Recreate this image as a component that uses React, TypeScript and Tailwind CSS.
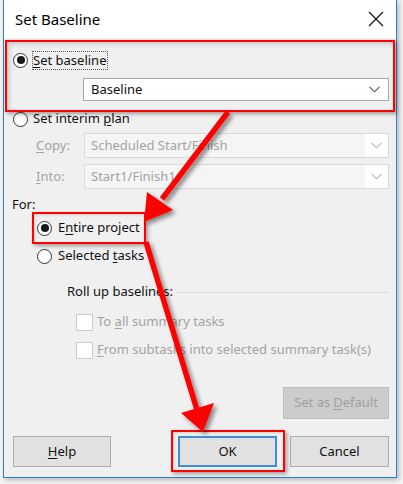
import React from "react";

const font = { fontFamily: '"Noto Sans", "Open Sans", sans-serif' };

function Radio({ checked }: { checked?: boolean }) {
  return (
    <span className="w-[15px] h-[15px] shrink-0 rounded-full border border-[#333333] bg-white flex items-center justify-center">
      {checked && <span className="w-[8px] h-[8px] rounded-full bg-[#1a1a1a]" />}
    </span>
  );
}

function Checkbox() {
  return <span className="w-[17px] h-[17px] shrink-0 border border-[#cccccc] bg-white" />;
}

function Chevron({ color }: { color: string }) {
  return (
    <svg width="11" height="7" viewBox="0 0 11 7" className="shrink-0">
      <path d="M0.5 0.8 L5.5 5.8 L10.5 0.8" fill="none" stroke={color} strokeWidth="1.1" />
    </svg>
  );
}

export default function App() {
  return (
    <div className="relative w-[403px] h-[484px] bg-[#f4f4f4] overflow-hidden text-[13px] text-[#111111]" style={font}>
      {/* dialog */}
      <div className="ml-[3px] w-[394px] h-[478px] border-x border-b border-[#2b7fd6] bg-[#f0f0f0] flex flex-col shadow-[2px_2px_5px_rgba(0,0,0,0.25)]">
        {/* title bar */}
        <div className="h-[38px] shrink-0 bg-white flex items-center pl-[11px] pr-[12px]">
          <span className="text-[15px] text-black leading-none">Set Baseline</span>
          <svg width="16" height="16" viewBox="0 0 16 16" className="ml-auto">
            <path d="M1 1 L15 15 M15 1 L1 15" stroke="#111" strokeWidth="1.2" />
          </svg>
        </div>

        {/* row: set baseline */}
        <div className="mt-[12px] h-[20px] pl-[9px] flex items-center gap-[4px]">
          <Radio checked />
          <span className="border border-dotted border-[#555] leading-[17px] pr-[1px]">
            <u className="underline-offset-2">S</u>et baseline
          </span>
        </div>
        <div className="mt-[8px] ml-[79px] w-[306px] h-[23px] border border-[#a8a8a8] bg-white flex items-center pl-[7px] pr-[8px]">
          <span>Baseline</span>
          <span className="ml-auto"><Chevron color="#555" /></span>
        </div>

        {/* set interim plan */}
        <div className="mt-[8px] h-[20px] pl-[9px] flex items-center gap-[5px]">
          <Radio />
          <span>Set interim <u className="underline-offset-2">p</u>lan</span>
        </div>
        <div className="mt-[4px] h-[25px] flex items-center">
          <span className="w-[80px] pl-[32px] text-[#a3a3a3]"><u className="underline-offset-2">C</u>opy:</span>
          <div className="w-[305px] h-[25px] border border-[#d9d9d9] bg-[#f5f5f5] flex items-center pl-[6px] text-[#a3a3a3]">
            <span>Scheduled Start/Finish</span>
            <span className="ml-auto h-full w-[23px] bg-white flex items-center justify-center"><Chevron color="#b5b5b5" /></span>
          </div>
        </div>
        <div className="mt-[6px] h-[25px] flex items-center">
          <span className="w-[80px] pl-[32px] text-[#a3a3a3]"><u className="underline-offset-2">I</u>nto:</span>
          <div className="w-[305px] h-[25px] border border-[#d9d9d9] bg-[#f5f5f5] flex items-center pl-[6px] text-[#a3a3a3]">
            <span>Start1/Finish1</span>
            <span className="ml-auto h-full w-[23px] bg-white flex items-center justify-center"><Chevron color="#b5b5b5" /></span>
          </div>
        </div>

        {/* For */}
        <div className="mt-[7px] h-[18px] pl-[8px] flex items-center">For:</div>
        <div className="mt-[4px] h-[20px] pl-[33px] flex items-center gap-[6px]">
          <Radio checked />
          <span>E<u className="underline-offset-2">n</u>tire project</span>
        </div>
        <div className="mt-[8px] h-[20px] pl-[33px] flex items-center gap-[6px]">
          <Radio />
          <span>Selected <u className="underline-offset-2">t</u>asks</span>
        </div>

        {/* roll up */}
        <div className="mt-[17px] h-[18px] pl-[63px] pr-[7px] flex items-center gap-[4px]">
          <span>Roll up baselines:</span>
          <span className="flex-1 h-px bg-[#dcdcdc]" />
        </div>
        <div className="mt-[12px] h-[18px] pl-[72px] flex items-center gap-[4px] text-[#a3a3a3]">
          <Checkbox />
          <span>To <u className="underline-offset-2">a</u>ll summary tasks</span>
        </div>
        <div className="mt-[10px] h-[18px] pl-[72px] flex items-center gap-[4px] text-[#a3a3a3]">
          <Checkbox />
          <span><u className="underline-offset-2">F</u>rom subtasks into selected summary task(s)</span>
        </div>

        {/* set as default */}
        <div className="mt-[28px] flex justify-end pr-[7px]">
          <div className="w-[106px] h-[32px] border border-[#bfbfbf] bg-[#cccccc] flex items-center justify-center text-[#a0a0a0]">
            Set as <u className="underline-offset-2 ml-[3px]">D</u>efault
          </div>
        </div>

        {/* buttons */}
        <div className="mt-[17px] flex items-center pl-[9px] pr-[7px]">
          <div className="w-[98px] h-[31px] border border-[#adadad] bg-[#e1e1e1] flex items-center justify-center">
            <u className="underline-offset-2">H</u>elp
          </div>
          <div className="ml-auto w-[99px] h-[31px] border-2 border-[#3d8ddb] bg-[#e1e1e1] flex items-center justify-center">
            OK
          </div>
          <div className="ml-[13px] w-[99px] h-[31px] border border-[#adadad] bg-[#e1e1e1] flex items-center justify-center">
            Cancel
          </div>
        </div>
      </div>

      {/* red annotation boxes */}
      <div className="absolute left-[5px] top-[40px] w-[390px] h-[72px] border-2 border-[#ff0000] shadow-[2px_2px_4px_rgba(0,0,0,0.35),inset_2px_2px_5px_rgba(0,0,0,0.18)]" />
      <div className="absolute left-[32px] top-[212px] w-[114px] h-[32px] border-2 border-[#ff0000] shadow-[2px_2px_4px_rgba(0,0,0,0.35),inset_1px_1px_3px_rgba(0,0,0,0.15)]" />
      <div className="absolute left-[171px] top-[430px] w-[114px] h-[42px] border-2 border-[#ff0000] shadow-[2px_2px_4px_rgba(0,0,0,0.35),inset_1px_1px_3px_rgba(0,0,0,0.15)]" />

      {/* arrows */}
      <svg className="absolute left-0 top-0 pointer-events-none" width="403" height="484" viewBox="0 0 403 484">
        <defs>
          <filter id="sh" x="-20%" y="-20%" width="150%" height="150%">
            <feDropShadow dx="3" dy="3" stdDeviation="2" floodColor="#000" floodOpacity="0.45" />
          </filter>
        </defs>
        <g filter="url(#sh)" fill="#ff0000" stroke="#ff0000">
          <line x1="228" y1="112" x2="162" y2="199" strokeWidth="5.5" />
          <polygon points="144,222 147,192 173,210" stroke="none" />
          <line x1="146" y1="242" x2="197" y2="410" strokeWidth="5.5" />
          <polygon points="203,432 181,413 214,403" stroke="none" />
        </g>
      </svg>
    </div>
  );
}
